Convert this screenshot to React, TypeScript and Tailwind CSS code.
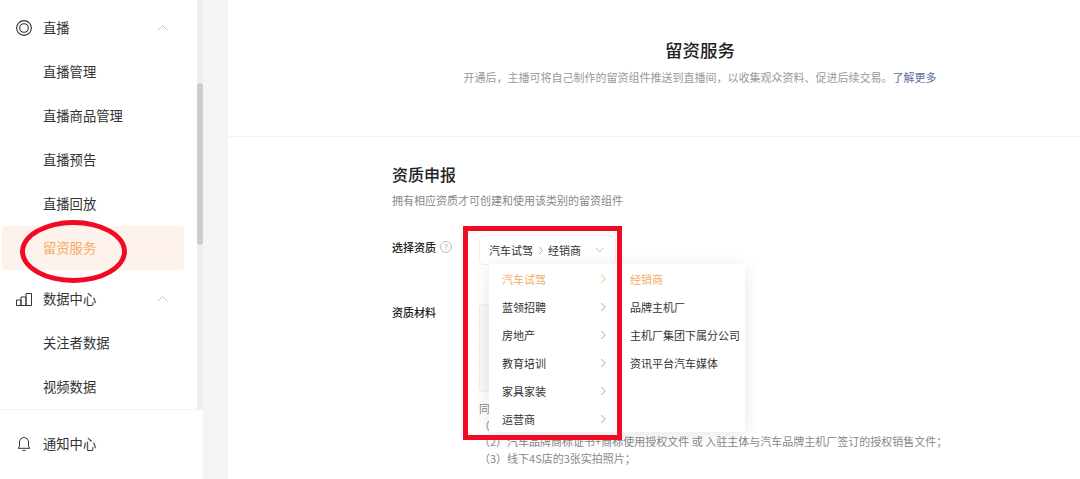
import React from "react";

const font = { fontFamily: '"Noto Sans CJK SC", "Noto Sans", sans-serif' };

// full-width punctuation kept as escapes
const intro =
  "开通后\uFF0C主播可将自己制作的留资组件推送到直播间\uFF0C以收集观众资料\u3001促进后续交易\u3002";
const noteTwo =
  "\uFF082\uFF09汽车品牌商标证书+商标使用授权文件 或 入驻主体与汽车品牌主机厂签订的授权销售文件\uFF1B";
const noteThree = "\uFF083\uFF09线下4S店的3张实拍照片\uFF1B";

function Chevron({ dir = "right", className = "" }: { dir?: "right" | "up" | "down"; className?: string }) {
  const paths = {
    right: "M1.500 1l4.500 4.500L1.500 10",
    up: "M.5 6.500l5-5 5 5",
    down: "M.5 1.500l5 5 5-5",
  };
  const box = dir === "right" ? "0 0 8 11" : "0 0 11 8";
  return (
    <svg viewBox={box} fill="none" stroke="currentColor" strokeWidth="1" className={className}>
      <path d={paths[dir]} />
    </svg>
  );
}

function LiveIcon() {
  return (
    <svg viewBox="0 0 16 16" fill="none" stroke="#333" strokeWidth="1.100" className="h-[16px] w-[16px]">
      <circle cx="8" cy="8" r="7.400" />
      <circle cx="8" cy="8" r="4.300" />
    </svg>
  );
}

function DataIcon() {
  return (
    <svg viewBox="0 0 16 13" fill="none" stroke="#333" strokeWidth="1" className="h-[13px] w-[16px]">
      <path d="M.5 12.500h15M.5 12.500V7h4.500v5.500M5 12.500V4h5v8.500M10 12.500V.5h5.500v12" />
    </svg>
  );
}

function BellIcon() {
  return (
    <svg viewBox="0 0 14 15" fill="none" stroke="#333" strokeWidth="1" className="h-[15px] w-[14px]">
      <path d="M1 12.300c1-.8 1.500-1.800 1.500-3.300V6a4.500 4.500 0 0 1 9 0v3c0 1.500.5 2.500 1.500 3.300zM5.500 14.500h3" />
    </svg>
  );
}

function NavItem({ label, active = false }: { label: string; active?: boolean }) {
  return (
    <div
      className={
        active
          ? "ml-[2px] flex h-[44px] w-[182px] items-center rounded-[3px] bg-[#fdf3ec] pl-[41px] text-[13.3px] text-[#f5ab64]"
          : "flex h-[44px] items-center pl-[43px] text-[13.3px] text-[#333]"
      }
    >
      {label}
    </div>
  );
}

function NavGroup({ icon, label }: { icon: React.ReactNode; label: string }) {
  return (
    <div className="flex h-[44px] items-center pl-[16px] text-[13.3px] text-[#333]">
      <span className="flex w-[27px] items-center">{icon}</span>
      <span>{label}</span>
      <Chevron dir="up" className="ml-auto mr-[29px] h-[8px] w-[11px] text-[#c4c4c4]" />
    </div>
  );
}

function Sidebar() {
  return (
    <aside className="flex h-[479px] w-[203px] shrink-0 flex-col bg-white">
      <div className="flex h-[410px] border-b border-[#f2f2f2]">
        <nav className="w-[197px] overflow-hidden pt-[6px]">
          <NavGroup icon={<LiveIcon />} label="直播" />
          <NavItem label="直播管理" />
          <NavItem label="直播商品管理" />
          <NavItem label="直播预告" />
          <NavItem label="直播回放" />
          <NavItem label="留资服务" active />
          <div className="h-[7px]" />
          <NavGroup icon={<DataIcon />} label="数据中心" />
          <NavItem label="关注者数据" />
          <NavItem label="视频数据" />
        </nav>
        <div className="w-[6px] bg-[#eeeeee] pt-[83px]">
          <div className="h-[162px] rounded-[3px] bg-[#cdcdcd]" />
        </div>
      </div>
      <div className="flex h-[67px] items-center pl-[17px] text-[13.3px] text-[#333]">
        <span className="flex w-[26px] items-center">
          <BellIcon />
        </span>
        通知中心
      </div>
    </aside>
  );
}

const firstLevel = ["汽车试驾", "蓝领招聘", "房地产", "教育培训", "家具家装", "运营商"];
const secondLevel = ["经销商", "品牌主机厂", "主机厂集团下属分公司", "资讯平台汽车媒体"];

function CascaderPopup() {
  return (
    <div className="absolute left-[10px] top-[29px] flex h-[168px] w-[256px] bg-white pt-px text-[11px] text-[#333] shadow-[0_2px_16px_rgba(0,0,0,0.1)]">
      <div className="w-[141px]">
        {firstLevel.map((item, i) => (
          <div
            key={item}
            className={`flex h-[28px] items-center justify-between pl-[13px] pr-[23px] ${i === 0 ? "text-[#f5ab64]" : ""}`}
          >
            {item}
            <Chevron className={`h-[10px] w-[7px] ${i === 0 ? "text-[#f5ab64]" : "text-[#999]"}`} />
          </div>
        ))}
      </div>
      <div className="flex-1">
        {secondLevel.map((item, i) => (
          <div key={item} className={`flex h-[28px] items-center ${i === 0 ? "text-[#f5ab64]" : ""}`}>
            {item}
          </div>
        ))}
      </div>
    </div>
  );
}

function Main() {
  return (
    <main className="h-[479px] flex-1 overflow-hidden bg-white">
      <header className="flex h-[137px] flex-col items-center border-b border-[#f2f2f2] pl-[92px] pt-[37px]">
        <h1 className="text-[17.500px] font-medium leading-[26px] text-[#222]">留资服务</h1>
        <p className="mt-[6px] text-[11px] leading-[16px] text-[#999]">
          {intro}
          <span className="text-[#5f6f9e]">了解更多</span>
        </p>
      </header>
      <section className="pl-[164px] pt-[25px]">
        <h2 className="text-[16px] font-medium leading-[24px] text-[#222]">资质申报</h2>
        <p className="mt-[6px] text-[11px] leading-[16px] text-[#888]">拥有相应资质才可创建和使用该类别的留资组件</p>
        <div className="mt-[27px] flex">
          <div className="flex w-[87px] items-start pt-[4px] text-[11px] font-medium leading-[16px] text-[#222]">
            选择资质
            <svg viewBox="0 0 12 12" fill="none" className="ml-[4px] mt-[2px] h-[12px] w-[12px]">
              <circle cx="6" cy="6" r="5.500" stroke="#bbb" />
              <text x="6" y="9" fontSize="8" textAnchor="middle" fill="#bbb">?</text>
            </svg>
          </div>
          <div className="relative">
            <div className="flex h-[30px] w-[137px] items-center rounded-[5px] border border-[#eeeeee] pl-[9px] pr-[11px] text-[11px] text-[#333]">
              汽车试驾
              <Chevron className="ml-[5px] mr-[4px] h-[9px] w-[6px] text-[#999]" />
              经销商
              <Chevron dir="down" className="ml-auto h-[6px] w-[9px] text-[#aaa]" />
            </div>
            <CascaderPopup />
          </div>
        </div>
        <div className="mt-[39px] flex">
          <div className="w-[87px] text-[11px] font-medium leading-[16px] text-[#222]">资质材料</div>
          <div>
            <div className="h-[88px] w-[137px] rounded-[4px] border border-dashed border-[#e8e8e8] bg-[#f8f8f8]" />
            <div className="mt-[8px] text-[11px] leading-[16.500px] text-[#888]">
              <p>同</p>
              <p>{"\uFF08"}</p>
              <p>{noteTwo}</p>
              <p>{noteThree}</p>
            </div>
          </div>
        </div>
      </section>
    </main>
  );
}

export default function App() {
  return (
    <div className="relative flex h-[479px] w-[1080px] overflow-hidden bg-[#f4f4f4]" style={font}>
      <Sidebar />
      <div className="w-[25px] shrink-0" />
      <Main />
      {/* red annotations on top of the screenshot */}
      <div className="pointer-events-none absolute left-[20px] top-[220px] h-[63px] w-[107px] rounded-[50%] border-[5px] border-[#f10a23]" />
      <div className="pointer-events-none absolute left-[463px] top-[226px] h-[214px] w-[159px] border-[5.500px] border-[#f10a23]" />
    </div>
  );
}
